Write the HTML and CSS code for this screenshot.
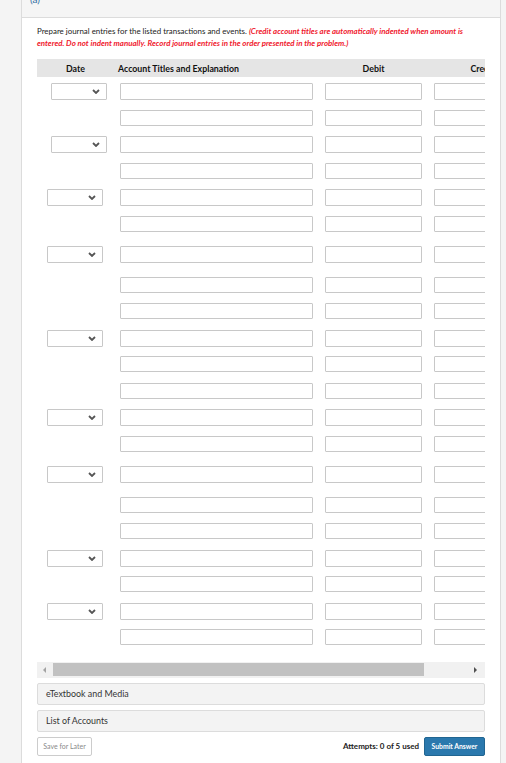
FILE: index.html
```html
<!DOCTYPE html>
<html lang="en">

<head>
    <meta charset="UTF-8">
    <meta name="viewport" content="width=device-width, initial-scale=1.0">
    <title>Journal Entries</title>
    <link rel="stylesheet" href="styles.css">
</head>

<body>

    <div class="panel">
        <div class="panel-head">
            <span class="part-label">(a)</span>
        </div>

        <div class="panel-body">
            <p class="instructions">
                Prepare journal entries for the listed transactions and events.
                <em class="note">(Credit account titles are automatically indented when amount is entered. Do not indent manually. Record journal entries in the order presented in the problem.)</em>
            </p>

            <div class="journal">
                <div class="journal-inner">
                    <div class="journal-head">
                        <div class="col-date">Date</div>
                        <div class="col-account">Account Titles and Explanation</div>
                        <div class="col-debit">Debit</div>
                        <div class="col-credit">Credit</div>
                    </div>

                    <div class="journal-body" id="journalBody"></div>
                </div>
            </div>

            <div class="scrollbar">
                <span class="arrow arrow-left"></span>
                <div class="track">
                    <div class="thumb"></div>
                </div>
                <span class="arrow arrow-right"></span>
            </div>

            <div class="resource">eTextbook and Media</div>
            <div class="resource">List of Accounts</div>

            <div class="actions">
                <button class="btn-save">Save for Later</button>
                <div class="submit-group">
                    <span class="attempts">Attempts: 0 of 5 used</span>
                    <button class="btn-submit">Submit Answer</button>
                </div>
            </div>
        </div>
    </div>

    <script>
        // number of lines in each entry, and whether the date box sits a bit further right
        const entries = [
            { lines: 2, narrow: true },
            { lines: 2, narrow: true },
            { lines: 2 },
            { lines: 3, spaced: true },
            { lines: 3 },
            { lines: 2 },
            { lines: 3, spaced: true },
            { lines: 2 },
            { lines: 2 }
        ];

        const chevron = '<svg width="8" height="5" viewBox="0 0 8 5"><polyline points="1,1 4,4 7,1" fill="none" stroke="#555" stroke-width="1.8"/></svg>';

        function buildRow(withDate, entry) {
            const row = document.createElement('div');
            row.className = 'entry-row';
            if (withDate && entry.spaced) row.classList.add('entry-row--spaced');

            let dateCell = '<div class="col-date"></div>';
            if (withDate) {
                dateCell = '<div class="col-date' + (entry.narrow ? ' col-date--inset' : '') + '">' +
                    '<div class="date-select">' + chevron + '</div></div>';
            }

            row.innerHTML = dateCell +
                '<div class="col-account"><input type="text" class="field"></div>' +
                '<div class="col-debit"><input type="text" class="field"></div>' +
                '<div class="col-credit"><input type="text" class="field"></div>';
            if (withDate) row.classList.add('entry-row--first');
            return row;
        }

        const body = document.getElementById('journalBody');
        entries.forEach(function (entry) {
            for (let i = 0; i < entry.lines; i++) {
                body.appendChild(buildRow(i === 0, entry));
            }
        });
    </script>

</body>

</html>
```

FILE: styles.css
```css
body {
    margin: 0;
    background-color: #f4f4f4;
    font-family: Lato, "Open Sans", sans-serif;
    color: #333;
}

.panel {
    margin-left: 21px;
    width: 478px;
    min-height: 763px;
    background-color: #fff;
    border-left: 1px solid #dcdcdc;
    border-right: 1px solid #dcdcdc;
}

.panel-head {
    height: 17px;
    padding-left: 8px;
    background-color: #f5f5f5;
    border-bottom: 1px solid #dcdcdc;
    overflow: hidden;
}

.part-label {
    display: block;
    margin-top: -7px;
    font-size: 10px;
    line-height: 12px;
    color: #2f6da3;
}

.panel-body {
    padding: 0 15px;
}

.instructions {
    margin: 7px 0 0;
    font-size: 7.9px;
    line-height: 12px;
    color: #222;
}

.note {
    font-weight: 700;
    color: #f0192e;
}

/* journal table */

.journal {
    margin-top: 10px;
    overflow: hidden;
}

.journal-inner {
    width: 520px;
}

.journal-head {
    display: flex;
    height: 18px;
    align-items: center;
    background-color: #e5e5e5;
    font-size: 8.8px;
    font-weight: 700;
    color: #111;
}

.col-date {
    width: 77px;
    flex-shrink: 0;
    box-sizing: border-box;
    padding-left: 10px;
}

.col-date--inset {
    padding-left: 14px;
}

.col-account {
    width: 205px;
    flex-shrink: 0;
    box-sizing: border-box;
    padding: 0 6px;
}

.col-debit,
.col-credit {
    width: 109px;
    flex-shrink: 0;
    box-sizing: border-box;
    padding: 0 6px;
}

.journal-head .col-date,
.journal-head .col-debit,
.journal-head .col-credit {
    padding: 0;
    text-align: center;
}

.journal-head .col-account {
    padding-left: 4px;
}

.journal-body {
    padding-top: 6px;
}

.entry-row {
    display: flex;
    align-items: flex-start;
    height: 26.5px;
}

.entry-row--spaced {
    margin: 4px 0;
}

.field {
    display: block;
    width: 100%;
    height: 16px;
    box-sizing: border-box;
    margin: 0;
    padding: 0 3px;
    border: 1px solid #c8c8c8;
    border-radius: 1px;
    background-color: #fff;
    font-family: Lato, sans-serif;
    font-size: 8px;
    outline: none;
}

.entry-row--first .field {
    height: 17px;
}

.date-select {
    display: flex;
    align-items: center;
    justify-content: flex-end;
    width: 56px;
    height: 17px;
    box-sizing: border-box;
    padding-right: 6px;
    border: 1px solid #c8c8c8;
    border-radius: 1px;
    background-color: #fff;
}

.date-select svg {
    display: block;
}

/* horizontal scrollbar */

.scrollbar {
    display: flex;
    align-items: center;
    height: 16px;
    margin-top: 6px;
    background-color: #f1f1f1;
}

.arrow {
    width: 0;
    height: 0;
    border-top: 3px solid transparent;
    border-bottom: 3px solid transparent;
}

.arrow-left {
    margin: 0 7px 0 6px;
    border-right: 3px solid #a3a3a3;
}

.arrow-right {
    margin: 0 8px 0 47px;
    border-left: 3px solid #505050;
}

.track {
    flex: 1;
}

.thumb {
    width: 371px;
    height: 13px;
    background-color: #c1c1c1;
}

/* resources */

.resource {
    height: 20px;
    margin-top: 5px;
    padding-left: 8px;
    display: flex;
    align-items: center;
    background-color: #f3f3f3;
    border: 1px solid #dcdcdc;
    border-radius: 2px;
    font-size: 8.9px;
    color: #333;
}

.actions {
    display: flex;
    justify-content: space-between;
    align-items: center;
    margin-top: 5px;
}

.btn-save {
    width: 55px;
    height: 19px;
    padding: 0;
    background-color: #fff;
    border: 1px solid #ccc;
    border-radius: 2px;
    font-family: Lato, sans-serif;
    font-size: 7px;
    color: #8a8a8a;
}

.submit-group {
    display: flex;
    align-items: center;
    gap: 5px;
}

.attempts {
    font-size: 8px;
    font-weight: 700;
    color: #222;
}

.btn-submit {
    width: 61px;
    height: 19px;
    padding: 0;
    background-color: #2a78ad;
    border: 1px solid #216591;
    border-radius: 2px;
    font-family: Lato, sans-serif;
    font-size: 6.8px;
    font-weight: 700;
    color: #fff;
}
```
